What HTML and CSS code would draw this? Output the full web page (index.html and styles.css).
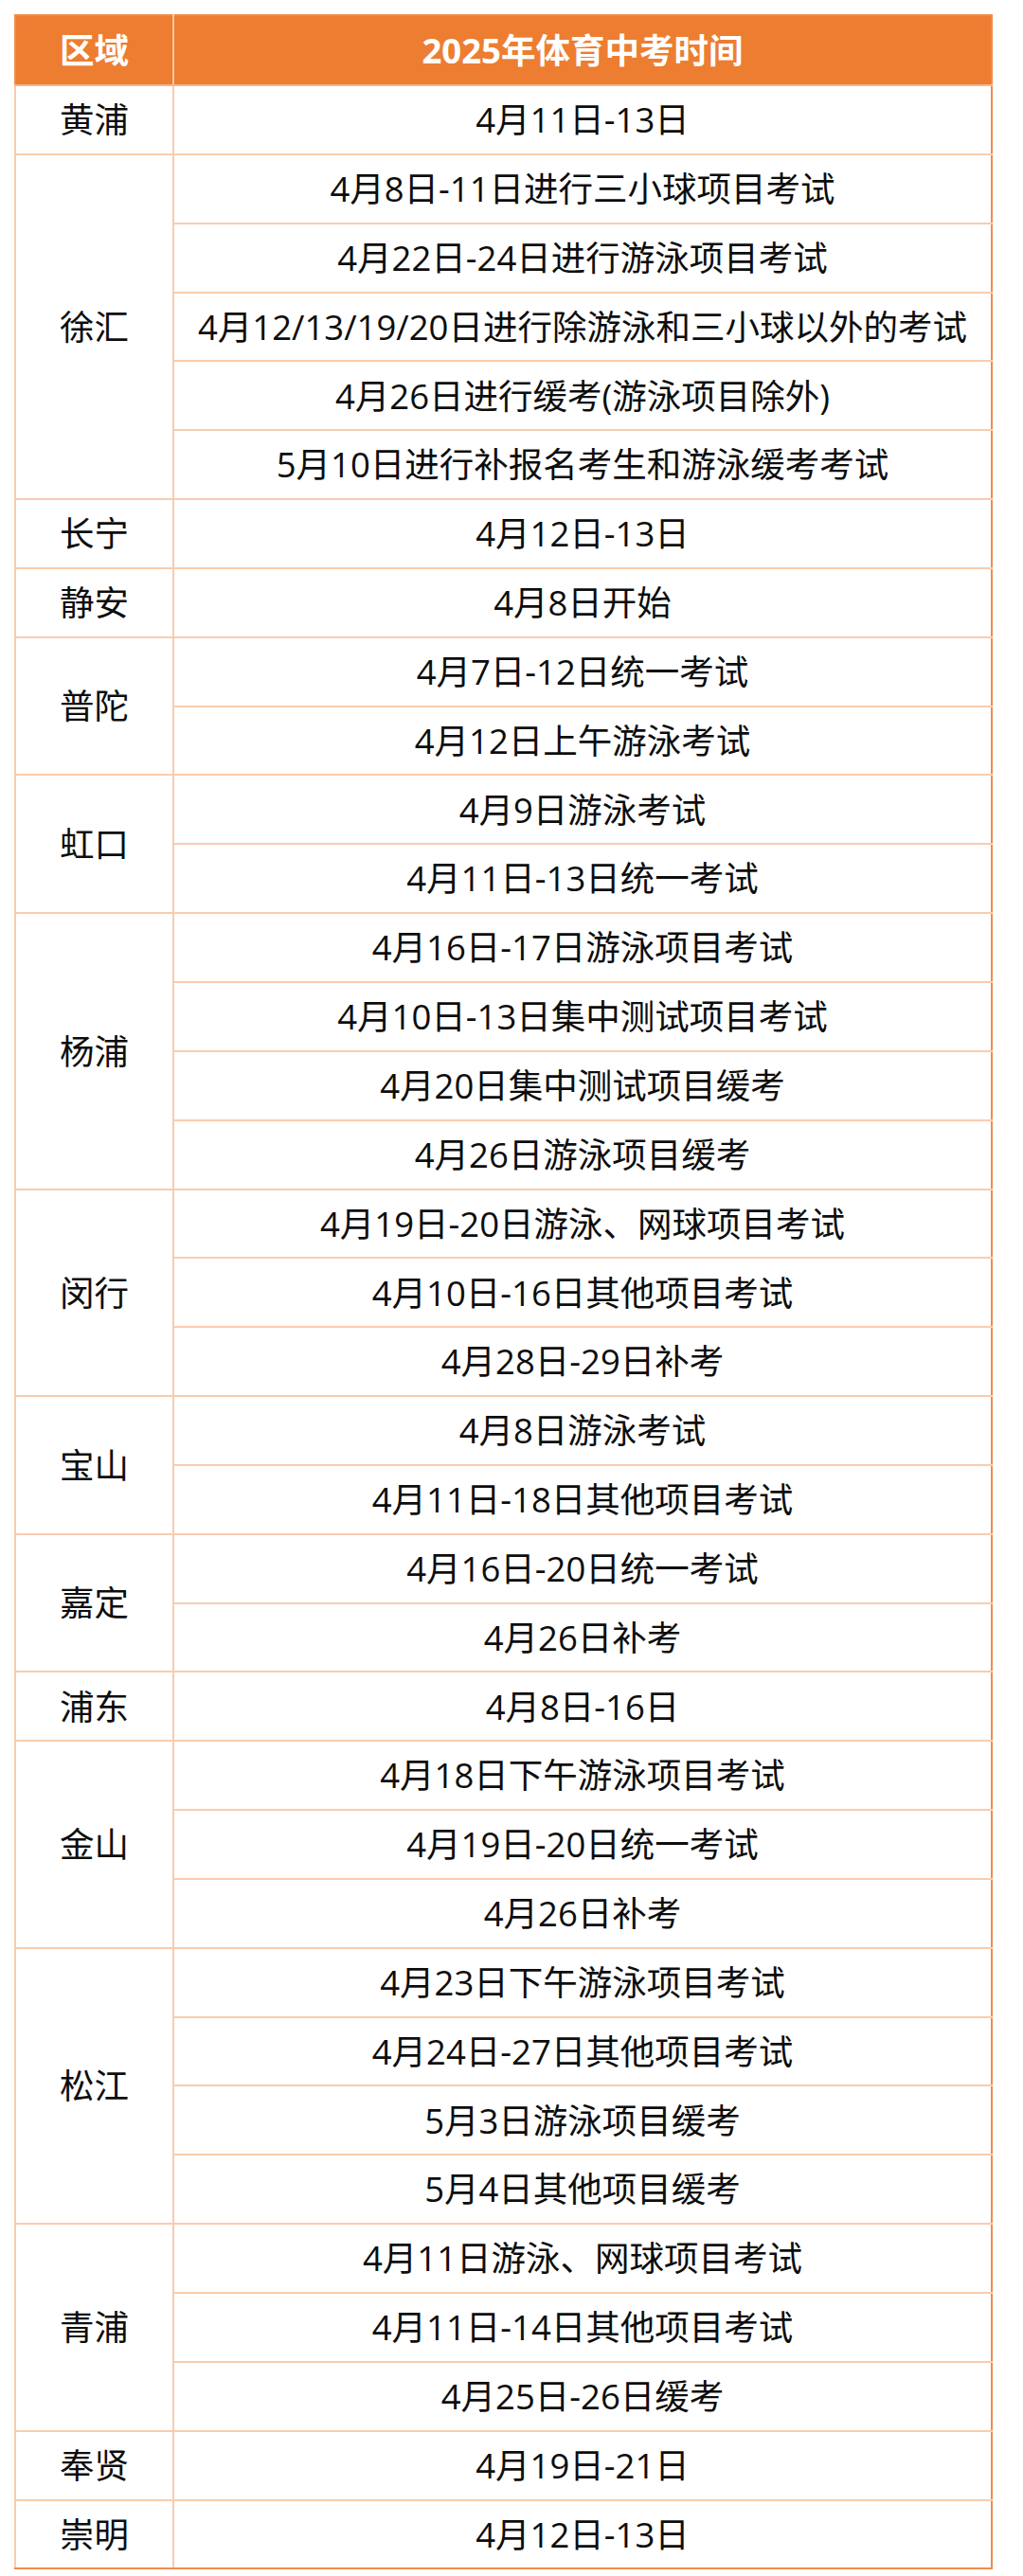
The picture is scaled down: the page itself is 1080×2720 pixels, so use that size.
FILE: index.html
```html
<!DOCTYPE html>
<html lang="zh-CN">
<head>
<meta charset="utf-8">
<title>2025年体育中考时间</title>
<link rel="stylesheet" href="styles.css">
</head>
<body>
<table class="sched">
  <thead>
    <tr><th class="c-area">区域</th><th class="c-time">2025年体育中考时间</th></tr>
  </thead>
  <tbody>
    <tr><td>黄浦</td><td>4月11日-13日</td></tr>
    <tr><td rowspan="5">徐汇</td><td>4月8日-11日进行三小球项目考试</td></tr>
    <tr><td>4月22日-24日进行游泳项目考试</td></tr>
    <tr><td>4月12/13/19/20日进行除游泳和三小球以外的考试</td></tr>
    <tr><td>4月26日进行缓考(游泳项目除外)</td></tr>
    <tr><td>5月10日进行补报名考生和游泳缓考考试</td></tr>
    <tr><td>长宁</td><td>4月12日-13日</td></tr>
    <tr><td>静安</td><td>4月8日开始</td></tr>
    <tr><td rowspan="2">普陀</td><td>4月7日-12日统一考试</td></tr>
    <tr><td>4月12日上午游泳考试</td></tr>
    <tr><td rowspan="2">虹口</td><td>4月9日游泳考试</td></tr>
    <tr><td>4月11日-13日统一考试</td></tr>
    <tr><td rowspan="4">杨浦</td><td>4月16日-17日游泳项目考试</td></tr>
    <tr><td>4月10日-13日集中测试项目考试</td></tr>
    <tr><td>4月20日集中测试项目缓考</td></tr>
    <tr><td>4月26日游泳项目缓考</td></tr>
    <tr><td rowspan="3">闵行</td><td>4月19日-20日游泳、网球项目考试</td></tr>
    <tr><td>4月10日-16日其他项目考试</td></tr>
    <tr><td>4月28日-29日补考</td></tr>
    <tr><td rowspan="2">宝山</td><td>4月8日游泳考试</td></tr>
    <tr><td>4月11日-18日其他项目考试</td></tr>
    <tr><td rowspan="2">嘉定</td><td>4月16日-20日统一考试</td></tr>
    <tr><td>4月26日补考</td></tr>
    <tr><td>浦东</td><td>4月8日-16日</td></tr>
    <tr><td rowspan="3">金山</td><td>4月18日下午游泳项目考试</td></tr>
    <tr><td>4月19日-20日统一考试</td></tr>
    <tr><td>4月26日补考</td></tr>
    <tr><td rowspan="4">松江</td><td>4月23日下午游泳项目考试</td></tr>
    <tr><td>4月24日-27日其他项目考试</td></tr>
    <tr><td>5月3日游泳项目缓考</td></tr>
    <tr><td>5月4日其他项目缓考</td></tr>
    <tr><td rowspan="3">青浦</td><td>4月11日游泳、网球项目考试</td></tr>
    <tr><td>4月11日-14日其他项目考试</td></tr>
    <tr><td>4月25日-26日缓考</td></tr>
    <tr><td>奉贤</td><td>4月19日-21日</td></tr>
    <tr><td>崇明</td><td>4月12日-13日</td></tr>
  </tbody>
</table>
</body>
</html>
```
FILE: styles.css
```css
html, body {
  margin: 0;
  padding: 0;
  background: #ffffff;
}
body {
  padding: 15px 0 0 15px;
  font-family: "Open Sans", "Noto Sans CJK SC", sans-serif;
  color: #0d0d0d;
}
.sched {
  border-collapse: collapse;
  width: 1033px;
  table-layout: fixed;
  border: 2px solid #ef8c4c;
}
.sched th {
  background: #ed7d31;
  color: #ffffff;
  font-weight: 700;
  font-size: 36.5px;
  height: 72px;
  padding: 0;
  text-align: center;
  vertical-align: middle;
  border-right: 2px solid #f8c7a4;
  border-bottom: 2px solid #f6b58a;
  line-height: 1;
}
.sched th:last-child {
  border-right: 2px solid #ef8c4c;
}
.c-area {
  width: 165px;
}
.sched td {
  font-size: 36.5px;
  height: 70.85px;
  padding: 0;
  text-align: center;
  vertical-align: middle;
  border: 2px solid #f9ccad;
  line-height: 1;
  white-space: nowrap;
}
.sched tr td:last-child {
  border-right: 2px solid #ef8c4c;
}
.sched tbody tr:last-child td {
  border-bottom: 2px solid #ef8c4c;
}
.sched td[rowspan] {
  border-bottom: 2px solid #f9ccad;
}
```
